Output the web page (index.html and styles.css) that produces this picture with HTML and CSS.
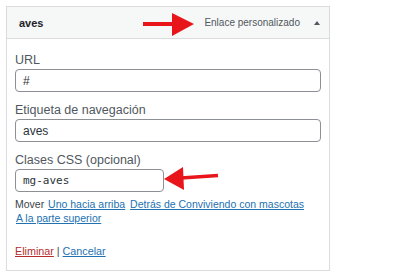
FILE: index.html
```html
<!DOCTYPE html>
<html lang="es">
<head>
    <meta charset="UTF-8">
    <meta name="viewport" content="width=device-width, initial-scale=1.0">
    <title>Elemento de menú</title>
    <link rel="stylesheet" href="styles.css">
</head>
<body>
    <div class="menu-item">
        <div class="item-head">
            <span class="item-title">aves</span>
            <span class="item-type">Enlace personalizado</span>
            <span class="item-toggle"></span>
        </div>
        <div class="item-settings">
            <label class="field-label">URL</label>
            <input class="field-input" type="text" value="#">

            <label class="field-label">Etiqueta de navegación</label>
            <input class="field-input" type="text" value="aves">

            <label class="field-label">Clases CSS (opcional)</label>
            <input class="field-input field-short" type="text" value="mg-aves">

            <div class="move-links">
                Mover <a href="#">Uno hacia arriba</a> <a href="#">Detrás de Conviviendo con mascotas</a> <a href="#">A la parte superior</a>
            </div>

            <div class="item-actions">
                <a href="#" class="delete">Eliminar</a> | <a href="#">Cancelar</a>
            </div>
        </div>
    </div>

    <!-- flechas de anotación sobre la captura -->
    <svg class="marks" width="400" height="280" viewBox="0 0 400 280">
        <line x1="143" y1="24" x2="174" y2="24" stroke="#e8161b" stroke-width="4"/>
        <polygon points="172,13 194,24 172,36" fill="#e8161b"/>
        <line x1="181" y1="178" x2="218" y2="175.5" stroke="#e8161b" stroke-width="3.5"/>
        <polygon points="164,179 183,167 184,190" fill="#e8161b"/>
    </svg>
</body>
</html>
```

FILE: styles.css
```css
body {
    margin: 0;
    background-color: #fff;
    font-family: "Liberation Sans", Arial, sans-serif;
    color: #3c434a;
}

.menu-item {
    width: 324px;
    box-sizing: border-box;
    margin: 6px 0 0 6px;
    border: 1px solid #dcdcde;
    box-shadow: 0 1px 1px rgba(0, 0, 0, 0.04);
}

.item-head {
    height: 31px;
    display: flex;
    align-items: center;
    padding: 0 9px 0 12px;
    background-color: #f6f7f7;
    border-bottom: 1px solid #dcdcde;
}

.item-title {
    flex: 1;
    font-size: 11px;
    font-weight: bold;
    color: #1d2327;
}

.item-type {
    font-size: 10px;
    color: #50575e;
    margin-right: 14px;
}

.item-toggle {
    width: 0;
    height: 0;
    border-left: 3px solid transparent;
    border-right: 3px solid transparent;
    border-bottom: 4px solid #50575e;
}

.item-settings {
    padding: 12px 8px 12px 8px;
}

.field-label {
    display: block;
    font-size: 12.5px;
    line-height: 18px;
    color: #50575e;
    margin-top: 9px;
}

.field-label:first-child {
    margin-top: 0;
}

.field-input {
    display: block;
    width: 306px;
    height: 23px;
    box-sizing: border-box;
    margin: 0;
    padding: 0 7px;
    border: 1px solid #8c8f94;
    border-radius: 4px;
    font-family: "Liberation Sans", Arial, sans-serif;
    font-size: 12px;
    color: #2c3338;
    background-color: #fff;
}

.field-short {
    width: 149px;
    font-family: "DejaVu Sans Mono", monospace;
    font-size: 11px;
}

.move-links {
    margin-top: 5px;
    font-size: 10.5px;
    line-height: 14px;
    color: #3c434a;
}

.move-links a {
    white-space: nowrap;
    margin: 0 1px;
}

.move-links a,
.item-actions a {
    color: #2271b1;
}

.item-actions {
    margin-top: 19px;
    font-size: 10.75px;
    line-height: 14px;
    color: #3c434a;
}

.item-actions a.delete {
    color: #b32d2e;
}

.marks {
    position: absolute;
    top: 0;
    left: 0;
    pointer-events: none;
}
```
